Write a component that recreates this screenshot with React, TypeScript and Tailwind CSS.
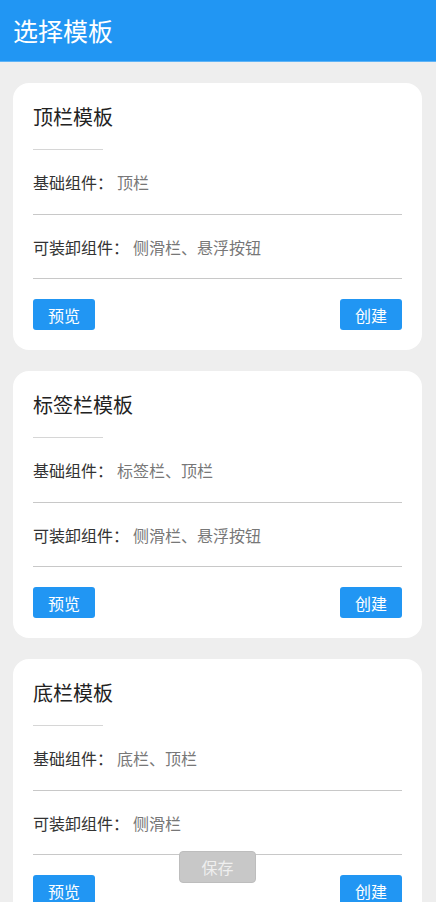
import React from 'react';

interface Template {
  title: string;
  base: string;
  optional: string;
}

const TEMPLATES: Template[] = [
  { title: '顶栏模板', base: '顶栏', optional: '侧滑栏、悬浮按钮' },
  { title: '标签栏模板', base: '标签栏、顶栏', optional: '侧滑栏、悬浮按钮' },
  { title: '底栏模板', base: '底栏、顶栏', optional: '侧滑栏' },
];

const TemplateCard: React.FC<{ tpl: Template }> = ({ tpl }) => (
  <div className="bg-white rounded-2xl px-5 pt-5 pb-5">
    <div className="text-[20px] leading-[28px] text-[#222]">{tpl.title}</div>
    <div className="mt-[18px] h-px w-[70px] bg-[#d6d6d6]" />
    <div className="h-[64px] flex items-center text-[16px]">
      <span className="text-[#333]">基础组件：</span>
      <span className="ml-1 text-[#777]">{tpl.base}</span>
    </div>
    <div className="h-px bg-[#c8c8c8]" />
    <div className="h-[63px] flex items-center text-[16px]">
      <span className="text-[#333]">可装卸组件：</span>
      <span className="ml-1 text-[#777]">{tpl.optional}</span>
    </div>
    <div className="h-px bg-[#c8c8c8]" />
    <div className="mt-5 flex justify-between">
      <button className="w-[62px] h-[31px] rounded-[3px] bg-[#2196f3] text-white text-[16px]">预览</button>
      <button className="w-[62px] h-[31px] rounded-[3px] bg-[#2196f3] text-white text-[16px]">创建</button>
    </div>
  </div>
);

export default function App() {
  return (
    <div className="min-h-screen bg-[#eeeeee]" style={{ fontFamily: '"Noto Sans CJK SC", "Noto Sans", sans-serif' }}>
      <header className="h-[62px] bg-[#2196f3] flex items-center px-[13px] border-b border-[#5eb3f6]">
        <h1 className="text-[25px] text-white">选择模板</h1>
      </header>
      <div className="pl-[13px] pr-[14px] pt-[21px] pb-5 flex flex-col gap-[21px]">
        {TEMPLATES.map(t => (
          <TemplateCard key={t.title} tpl={t} />
        ))}
      </div>
      <button className="fixed left-[179px] bottom-[19px] w-[77px] h-[32px] rounded-[4px] bg-[#c8c8c8] text-[#efefef] text-[16px] border border-[#bdbdbd]">
        保存
      </button>
    </div>
  );
}
